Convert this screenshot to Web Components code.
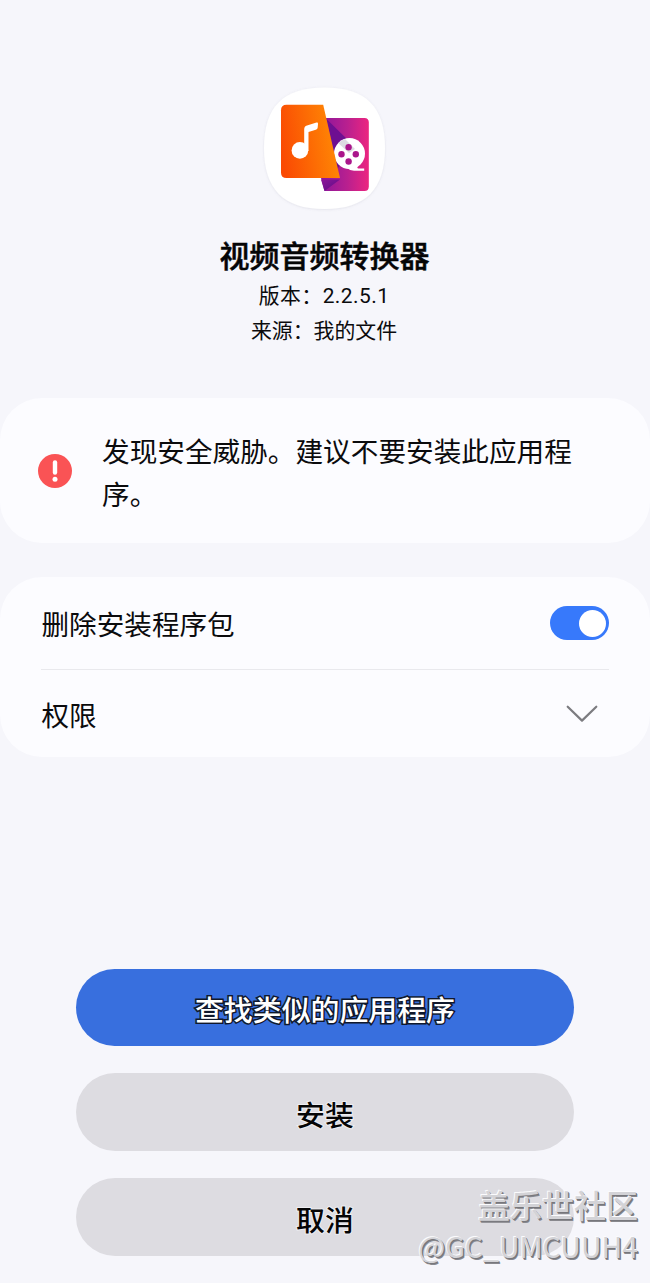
<!DOCTYPE html>
<html lang="zh-CN">
<head>
<meta charset="utf-8">
<title>安装应用程序</title>
<style>
html,body{margin:0;height:100%}
body{background:#f6f6fb;font-family:Roboto,"Noto Sans CJK SC",sans-serif;color:#0b0b0d;overflow:hidden}
</style>
</head>
<body>
<installer-page></installer-page>
<script>
function define(name, html){
  const t=document.createElement('template');
  t.innerHTML=html;
  customElements.define(name,class extends HTMLElement{
    constructor(){super();this.attachShadow({mode:'open'}).appendChild(t.content.cloneNode(true));}
  });
}

define('app-icon',`
<style>:host{display:block;width:130px;height:130px}svg{display:block}</style>
<svg width="130" height="130" viewBox="260 83 130 130">
  <defs>
    <linearGradient id="o" x1="0" y1=".6" x2="1" y2=".4"><stop offset="0" stop-color="#fa4a03"/><stop offset="1" stop-color="#ff8c05"/></linearGradient>
    <linearGradient id="p" x1="0" y1="0" x2="1" y2="0"><stop offset="0" stop-color="#8b159c"/><stop offset=".55" stop-color="#b9208f"/><stop offset="1" stop-color="#ec2580"/></linearGradient>
    <linearGradient id="d" x1="0" y1="0" x2="1" y2="1"><stop offset="0" stop-color="#8d1699"/><stop offset="1" stop-color="#5b0c86"/></linearGradient>
    <filter id="s" x="-10%" y="-10%" width="120%" height="120%"><feDropShadow dx="0" dy="0.5" stdDeviation="1" flood-color="#77778c" flood-opacity=".18"/></filter>
    <clipPath id="r"><circle cx="349.5" cy="153.6" r="15.2"/></clipPath>
  </defs>
  <path filter="url(#s)" fill="#fff" d="M324.500 87.500C366 87.500 385 107 385 148S366 209 324.500 209S264 189 264 148S283 87.500 324.500 87.500Z"/>
  <path fill="url(#p)" d="M326 118H364.500Q368.800 118 368.800 122.500V186.500Q368.800 191 364.500 191H324.500L321 178Z"/>
  <path fill="#6e0f91" d="M326.500 119L352 144L337 170Z"/>
  <path fill="url(#d)" d="M321 179.500H340L324.500 191Z"/>
  <circle cx="349.500" cy="153.600" r="15.500" fill="#fff"/>
  <path clip-path="url(#r)" fill="#dddce2" d="M343 137L355 149L349 153L336 141Z"/>
  <path fill="#fff" d="M347 168L358 165.500Q356.500 168.300 358.500 168.500H364.200V170.800H354Q350 170.800 347 168Z"/>
  <g fill="#aa168b"><circle cx="348.600" cy="147.200" r="3.200"/><circle cx="341.500" cy="154.300" r="3.200"/><circle cx="355.800" cy="154.300" r="3.200"/><circle cx="348.600" cy="161.500" r="3.200"/></g>
  <path fill="url(#o)" d="M286.500 104.800H323.200L340 178H286.500Q281 178 281 172.500V110.300Q281 104.800 286.500 104.800Z"/>
  <circle cx="299.900" cy="150.400" r="8.300" fill="#fff"/>
  <path fill="#fff" d="M304.200 151V129.200Q304.200 126.200 307 125.400L316.500 122.600Q318.200 122.100 318 123.900L317.700 127.600Q317.500 129.300 315.800 129.800L308.500 132V151Z"/>
</svg>`);

define('app-header',`
<style>
:host{display:flex;flex-direction:column;align-items:center;padding-top:83px;height:398px;box-sizing:border-box;text-align:center}
h1{margin:22px 1px 0 0;font-size:30px;line-height:44px;font-weight:500;white-space:nowrap;-webkit-text-stroke:.5px #050506;color:#050506}
p{margin:0 2px 0 0;font-size:20.900px;line-height:35px;white-space:nowrap}
.v{letter-spacing:.45px}
</style>
<app-icon></app-icon><h1><slot name="title"></slot></h1><p class="v"><slot name="version"></slot></p><p><slot name="source"></slot></p>`);

define('threat-card',`
<style>
:host{display:flex;align-items:center;box-sizing:border-box;height:145px;background:#fcfcff;border-radius:42px;padding:0 38px}
svg{flex:none;margin-right:30px}
p{margin:6px 0 0;font-size:27.650px;line-height:43px;width:480px}
</style>
<svg width="34" height="34" viewBox="0 0 34 34"><circle cx="17" cy="17" r="17" fill="#fa5355"/><path d="M17 8.500V18.600" stroke="#fff" stroke-width="4.400" stroke-linecap="round"/><circle cx="17" cy="25.300" r="2.500" fill="#fff"/></svg>
<p><slot></slot></p>`);

define('option-card',`
<style>:host{display:block;box-sizing:border-box;height:180px;margin-top:34px;background:#fcfcff;border-radius:42px;padding:0 41px}</style><slot></slot>`);

define('option-row',`
<style>
:host{display:flex;align-items:center;justify-content:space-between;height:92px;font-size:27.600px;line-height:40px}
:host([divided]){border-bottom:1px solid #e9e9ed}
:host(:not([divided])){height:87px}
span{margin:6px 0 0 .5px}
</style><span><slot></slot></span><slot name="control"></slot>`);

define('toggle-switch',`
<style>:host{display:flex;justify-content:flex-end;align-items:center;width:59px;height:34px;box-sizing:border-box;padding-right:3px;border-radius:17px;background:#3779fb}i{width:27px;height:27px;border-radius:50%;background:#fff}</style><i></i>`);

define('chevron-down',`
<style>:host{display:block;margin-right:11px}svg{display:block}</style>
<svg width="32" height="18" viewBox="0 0 32 18"><path d="M1.700 1.700L16 15.600L30.300 1.700" fill="none" stroke="#7c7c80" stroke-width="2.200" stroke-linecap="round" stroke-linejoin="round"/></svg>`);

define('pill-button',`
<style>
:host{display:block;height:77.500px}
button{display:flex;align-items:center;justify-content:center;width:100%;height:100%;border:0;border-radius:39px;background:#dddce1;color:#050506;font:500 28.900px Roboto,"Noto Sans CJK SC",sans-serif;padding:2px 0 0;-webkit-text-stroke:2px #eeeef1;paint-order:stroke fill}
:host([primary]) button{background:#386fde;color:#fff;-webkit-text-stroke:3px #10182c}
</style><button><slot></slot></button>`);

define('action-stack',`<style>:host{display:flex;flex-direction:column;gap:27.300px;width:498px;margin:211.500px auto 0}</style><slot></slot>`);

define('community-mark',`
<style>
:host{position:absolute;right:12px;bottom:17px;display:flex;flex-direction:column;align-items:flex-end;color:#d3d3d7;text-shadow:-1px -1px 0 #fbfbfd,1px 1px 0 #77777c,1.500px 1.500px 0 #88888d;white-space:nowrap;font-family:"Noto Sans CJK SC",sans-serif}
b{font-size:32px;line-height:44px;font-weight:500}
span{font-size:28.500px;line-height:40px}
b span{font-size:inherit;line-height:inherit}
</style><b><slot name="name"></slot></b><span><slot name="user"></slot></span>`);

define('installer-page',`
<style>:host{display:block;position:relative;width:650px;height:1283px;overflow:hidden;background:#f6f6fb}</style>
<app-header><span slot="title">视频音频转换器</span><span slot="version">版本：2.2.5.1</span><span slot="source">来源：我的文件</span></app-header>
<threat-card>发现安全威胁。建议不要安装此应用程序。</threat-card>
<option-card>
  <option-row divided>删除安装程序包<toggle-switch slot="control"></toggle-switch></option-row>
  <option-row>权限<chevron-down slot="control"></chevron-down></option-row>
</option-card>
<action-stack><pill-button primary>查找类似的应用程序</pill-button><pill-button>安装</pill-button><pill-button>取消</pill-button></action-stack>
<community-mark><span slot="name">盖乐世社区</span><span slot="user">@GC_UMCUUH4</span></community-mark>`);
</script>
</body>
</html>
